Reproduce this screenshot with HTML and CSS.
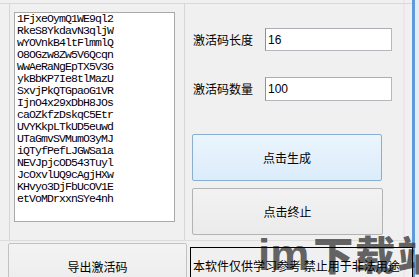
FILE: index.html
```html
<!DOCTYPE html>
<html lang="zh">
<head>
<meta charset="utf-8">
<link rel="stylesheet" href="styles.css">
</head>
<body>
<div class="window">
  <div class="main">
    <div class="top">
      <div class="left-panel">
        <div class="codes">1FjxeOymQ1WE9ql2
RkeS8YkdavN3qljW
wYOVnkB4ltFlmmlQ
O8OGzw8Zw5V6Qcqn
WwAeRaNgEpTX5V3G
ykBbKP7Ie8tlMazU
SxvjPkQTGpaoG1VR
IjnO4x29xDbH8JOs
caOZkfzDskqC5Etr
UVYKkpLTkUD5euwd
UTaGmvSVMumO3yMJ
iQTyfPefLJGWSa1a
NEVJpjcOD543Tuyl
JcOxvlUQ9cAgjHXw
KHvyo3DjFbUcOV1E
etVoMDrxxnSYe4nh</div>
      </div>
      <div class="right-panel">
        <div class="field">
          <span class="label">激活码长度</span>
          <input class="input" type="text" value="16">
        </div>
        <div class="field field-count">
          <span class="label">激活码数量</span>
          <input class="input" type="text" value="100">
        </div>
        <button class="btn btn-generate">点击生成</button>
        <button class="btn btn-stop">点击终止</button>
      </div>
    </div>
    <div class="bottom">
      <button class="btn btn-export">导出激活码</button>
      <div class="notice">本软件仅供学习参考 禁止用于非法用途</div>
    </div>
  </div>
  <div class="edge"></div>
  <div class="watermark"><span class="wm-latin">im</span>下载站</div>
</div>
</body>
</html>
```

FILE: styles.css
```css
html, body {
  margin: 0;
  padding: 0;
}

body {
  background: #f0f0f0;
  font-family: "Noto Sans CJK SC", "Liberation Sans", sans-serif;
  font-size: 12px;
  color: #000;
}

.window {
  position: relative;
  display: flex;
  width: 419px;
  height: 277px;
  overflow: hidden;
  background: #f0f0f0;
}

.main {
  width: 412px;
  flex: none;
  display: flex;
  flex-direction: column;
  background: linear-gradient(to right, transparent 403px, #f3e3ea 403px, #f3e3ea 405px, transparent 405px), #f0f0f0;
}

.top {
  display: flex;
  margin-top: 3px;
  height: 238px;
  flex: none;
  border-top: 1px solid #d9d9d9;
  border-bottom: 1px solid #dcdcdc;
  box-sizing: border-box;
}

.left-panel {
  margin-left: 9px;
  width: 176px;
  flex: none;
  border-left: 1px solid #d6d6d6;
  border-right: 1px solid #d6d6d6;
  box-sizing: border-box;
  padding: 8px 0 0 4px;
}

.codes {
  width: 161px;
  height: 210px;
  box-sizing: border-box;
  background: #fff;
  border: 1px solid #a9a9a9;
  padding: 0 0 0 2px;
  font-family: "Liberation Mono", monospace;
  font-size: 11.5px;
  letter-spacing: -0.9px;
  line-height: 12px;
  white-space: pre;
  overflow: hidden;
}

.right-panel {
  flex: 1;
  display: flex;
  flex-direction: column;
  padding-left: 7px;
}

.field {
  display: flex;
  align-items: center;
  margin-top: 24px;
  height: 23px;
}

.field-count {
  margin-top: 26px;
  height: 24px;
}

.label {
  width: 73px;
  flex: none;
  padding-left: 1px;
  box-sizing: border-box;
  font-size: 12px;
  line-height: 14px;
}

.input {
  width: 127px;
  height: 100%;
  box-sizing: border-box;
  margin: 0;
  border: 1px solid #b5b7bc;
  border-left-color: #8e8f94;
  border-top-color: #abadb3;
  background: #fff;
  padding: 0 0 0 2px;
  font-family: "Liberation Sans", sans-serif;
  font-size: 12px;
  color: #000;
  outline: none;
}

.btn {
  margin: 0;
  padding: 0;
  box-sizing: border-box;
  font-family: "Noto Sans CJK SC", sans-serif;
  font-size: 12px;
  color: #000;
  border-radius: 2px;
  cursor: default;
}

.btn-generate {
  margin-top: 33px;
  width: 190px;
  height: 47px;
  border: 1px solid #8aaed2;
  background: linear-gradient(#eaf5fd, #dcecfb);
}

.btn-stop {
  margin-top: 7px;
  width: 191px;
  height: 47px;
  border: 1px solid #b3b3b3;
  background: linear-gradient(#f2f2f2, #ebebeb);
}

.bottom {
  display: flex;
  align-items: flex-start;
  height: 36px;
  flex: none;
}

.btn-export {
  margin: 2px 0 0 8px;
  width: 179px;
  height: 46px;
  flex: none;
  border: 1px solid #c2c2c2;
  background: linear-gradient(#f3f3f3, #ececec);
  padding-top: 1px;
}

.notice {
  position: relative;
  z-index: 1;
  margin: 6px 0 0 3px;
  width: 223px;
  height: 40px;
  flex: none;
  box-sizing: border-box;
  border: 1px solid #000;
  background: transparent;
  padding: 11px 0 0 2px;
  font-size: 12px;
  line-height: 14px;
  white-space: nowrap;
}

.edge {
  flex: 1;
  border-left: 3px solid #6399d6;
  background: #e4ecf6;
}

.watermark {
  position: absolute;
  z-index: 0;
  left: 258px;
  top: 233px;
  font-family: "Noto Sans CJK SC", sans-serif;
  font-weight: 900;
  font-size: 40px;
  line-height: 1;
  letter-spacing: 2px;
  color: rgba(60, 60, 60, 0.8);
  white-space: nowrap;
  pointer-events: none;
}

.wm-latin {
  font-family: "Liberation Sans", sans-serif;
  font-weight: 700;
  font-size: 44px;
  letter-spacing: 0;
  margin-right: 4px;
}
```
